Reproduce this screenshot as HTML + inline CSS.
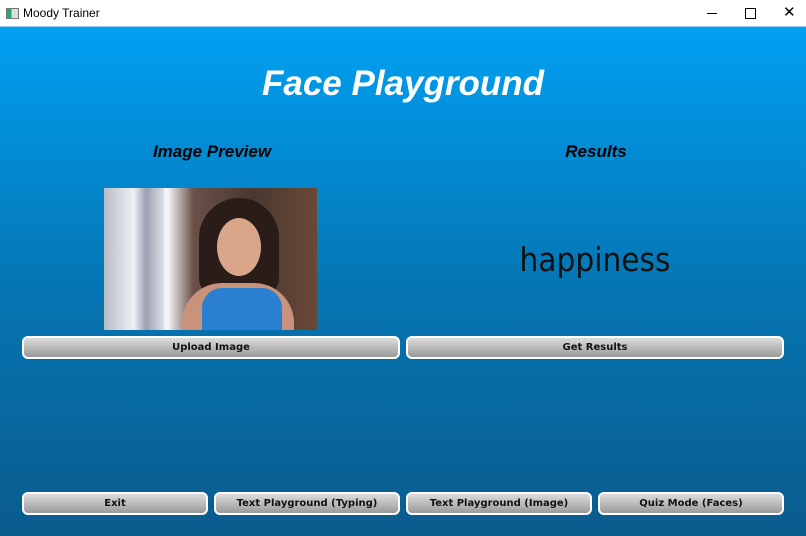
<!DOCTYPE html>
<html><head><style>
body{margin:0;width:806px;height:536px;overflow:hidden;font-family:"DejaVu Sans","Liberation Sans",sans-serif;position:relative}
.tb{position:absolute;left:0;top:0;width:806px;height:26px;background:#fff;border-bottom:1px solid #9cd3f3}
.tb span{position:absolute;left:23px;top:6px;font:12px "Liberation Sans",sans-serif;color:#000}
.main{position:absolute;left:0;top:27px;width:806px;height:509px;background:linear-gradient(#00a0f2,#0576b4 50%,#0a5b8c)}
.t{position:absolute;color:#fff;font-weight:bold;font-style:italic;text-align:center;white-space:nowrap}
.h{position:absolute;color:#000;font-weight:bold;font-style:italic;font-size:17px;font-family:"Liberation Sans",sans-serif;text-align:center;width:300px}
.b{position:absolute;height:19px;border:2px solid #fff;border-radius:6px;background:linear-gradient(#dcdcdc,#9a9a9a);font:bold 10px "DejaVu Sans",sans-serif;color:#111;text-align:center;line-height:19px;box-sizing:content-box}
</style></head><body>
<div class="tb"><div style="position:absolute;left:6px;top:8px;width:11px;height:9px;border:1px solid #777;background:linear-gradient(90deg,#2a6 0 40%,#ddd 40%)"></div><span>Moody Trainer</span>
<div style="position:absolute;left:707px;top:13px;width:10px;height:1px;background:#000"></div>
<div style="position:absolute;left:745px;top:8px;width:9px;height:9px;border:1px solid #000"></div>
<div style="position:absolute;left:783px;top:3px;font:15px sans-serif">✕</div></div>
<div class="main"></div>
<div class="t" style="left:0;width:806px;top:64px;font-size:35px;font-family:'Liberation Sans',sans-serif">Face Playground</div>
<div class="h" style="left:62px;top:142px">Image Preview</div>
<div class="h" style="left:446px;top:142px">Results</div>
<div style="position:absolute;left:104px;top:188px;width:213px;height:142px;overflow:hidden;background:linear-gradient(90deg,#c8ccd4 0,#e8ecf2 20%,#f4f6f8 30%,#6a5048 42%,#4a3830 70%,#6a4838 100%)">
<div style="position:absolute;left:0;top:0;width:60px;height:142px;background:linear-gradient(90deg,#b8bcc6,#eef0f4 50%,#9aa0b0 70%,#dde0e8)"></div>
<div style="position:absolute;left:95px;top:10px;width:80px;height:100px;border-radius:40px 40px 20px 20px;background:#2a1c18"></div>
<div style="position:absolute;left:113px;top:30px;width:44px;height:58px;border-radius:50%;background:#d9a68a"></div>
<div style="position:absolute;left:78px;top:95px;width:112px;height:60px;border-radius:40px 40px 0 0;background:#c9927a"></div>
<div style="position:absolute;left:98px;top:100px;width:80px;height:50px;border-radius:20px 20px 0 0;background:#2a7fd0"></div>
</div>
<div style="position:absolute;left:445px;top:240px;width:300px;text-align:center;font-size:33px;color:#111;font-family:'DejaVu Sans',sans-serif;transform:scaleX(0.9)">happiness</div>
<div class="b" style="left:22px;top:336px;width:374px">Upload Image</div>
<div class="b" style="left:406px;top:336px;width:374px">Get Results</div>
<div class="b" style="left:22px;top:492px;width:182px">Exit</div>
<div class="b" style="left:214px;top:492px;width:182px">Text Playground (Typing)</div>
<div class="b" style="left:406px;top:492px;width:182px">Text Playground (Image)</div>
<div class="b" style="left:598px;top:492px;width:182px">Quiz Mode (Faces)</div>
</body></html>
